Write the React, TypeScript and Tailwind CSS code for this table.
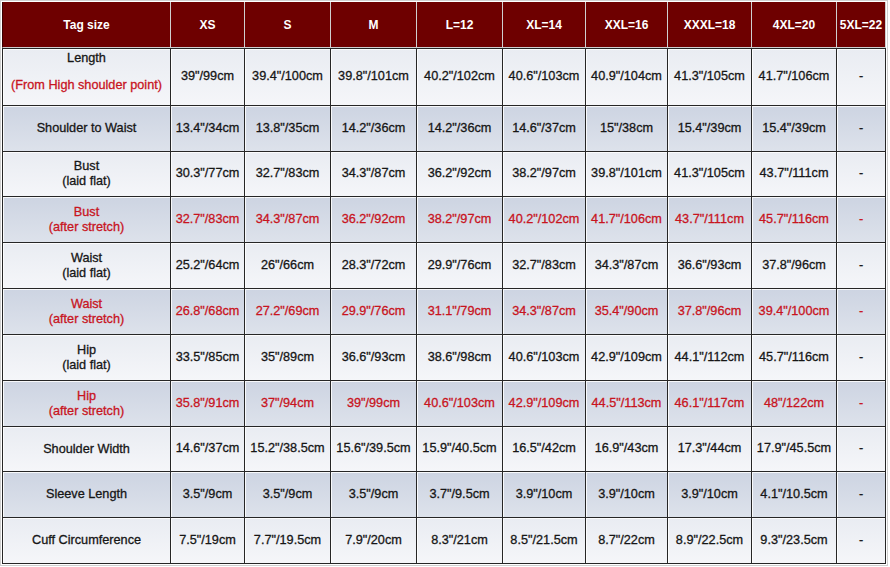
import React from "react";

type Row = {
	label: string;
	sub?: string;
	red?: boolean;
	dark?: boolean;
	values: string[];
};

const sizes = ["XS", "S", "M", "L=12", "XL=14", "XXL=16", "XXXL=18", "4XL=20", "5XL=22"];

const rows: Row[] = [
	{
		label: "Length",
		sub: "(From High shoulder point)",
		values: ['39"/99cm', '39.4"/100cm', '39.8"/101cm', '40.2"/102cm', '40.6"/103cm', '40.9"/104cm', '41.3"/105cm', '41.7"/106cm', "-"],
	},
	{
		label: "Shoulder to Waist",
		dark: true,
		values: ['13.4"/34cm', '13.8"/35cm', '14.2"/36cm', '14.2"/36cm', '14.6"/37cm', '15"/38cm', '15.4"/39cm', '15.4"/39cm', "-"],
	},
	{
		label: "Bust",
		sub: "(laid flat)",
		values: ['30.3"/77cm', '32.7"/83cm', '34.3"/87cm', '36.2"/92cm', '38.2"/97cm', '39.8"/101cm', '41.3"/105cm', '43.7"/111cm', "-"],
	},
	{
		label: "Bust",
		sub: "(after stretch)",
		red: true,
		dark: true,
		values: ['32.7"/83cm', '34.3"/87cm', '36.2"/92cm', '38.2"/97cm', '40.2"/102cm', '41.7"/106cm', '43.7"/111cm', '45.7"/116cm', "-"],
	},
	{
		label: "Waist",
		sub: "(laid flat)",
		values: ['25.2"/64cm', '26"/66cm', '28.3"/72cm', '29.9"/76cm', '32.7"/83cm', '34.3"/87cm', '36.6"/93cm', '37.8"/96cm', "-"],
	},
	{
		label: "Waist",
		sub: "(after stretch)",
		red: true,
		dark: true,
		values: ['26.8"/68cm', '27.2"/69cm', '29.9"/76cm', '31.1"/79cm', '34.3"/87cm', '35.4"/90cm', '37.8"/96cm', '39.4"/100cm', "-"],
	},
	{
		label: "Hip",
		sub: "(laid flat)",
		values: ['33.5"/85cm', '35"/89cm', '36.6"/93cm', '38.6"/98cm', '40.6"/103cm', '42.9"/109cm', '44.1"/112cm', '45.7"/116cm', "-"],
	},
	{
		label: "Hip",
		sub: "(after stretch)",
		red: true,
		dark: true,
		values: ['35.8"/91cm', '37"/94cm', '39"/99cm', '40.6"/103cm', '42.9"/109cm', '44.5"/113cm', '46.1"/117cm', '48"/122cm', "-"],
	},
	{
		label: "Shoulder Width",
		values: ['14.6"/37cm', '15.2"/38.5cm', '15.6"/39.5cm', '15.9"/40.5cm', '16.5"/42cm', '16.9"/43cm', '17.3"/44cm', '17.9"/45.5cm', "-"],
	},
	{
		label: "Sleeve Length",
		dark: true,
		values: ['3.5"/9cm', '3.5"/9cm', '3.5"/9cm', '3.7"/9.5cm', '3.9"/10cm', '3.9"/10cm', '3.9"/10cm', '4.1"/10.5cm', "-"],
	},
	{
		label: "Cuff Circumference",
		values: ['7.5"/19cm', '7.7"/19.5cm', '7.9"/20cm', '8.3"/21cm', '8.5"/21.5cm', '8.7"/22cm', '8.9"/22.5cm', '9.3"/23.5cm', "-"],
	},
];

// slightly heavier text, the source is a soft jpeg
const cellText = "text-[12.7px] [-webkit-text-stroke:0.3px_currentColor]";

const App = () => {
	return (
		<div className="w-[890px] h-[567px] bg-white font-['Liberation_Sans',Arial,sans-serif]">
			<div className="inline-block border border-[#cfcfcf] p-px bg-white">
				<div className="grid grid-cols-[169px_74px_86px_86px_86px_83px_82px_84px_85px_49px] grid-rows-[46px_58px_46px_45px_46px_46px_46px_46px_46px_45px_46px_46px]">
					{/* header */}
					<div className="flex items-center justify-center bg-[#6e0000] border-l border-l-[#3a0000] border-r border-b border-[#cfcfcf] text-white font-bold text-[12px]">
						Tag size
					</div>
					{sizes.map((s) => (
						<div
							key={s}
							className="flex items-center justify-center bg-[#6e0000] border-r border-b border-[#cfcfcf] text-white font-bold text-[12px] whitespace-nowrap"
						>
							{s}
						</div>
					))}

					{rows.map((row, ri) => {
						const bg = row.dark
							? "bg-gradient-to-b from-[#cdd4e2] to-[#dde2eb]"
							: "bg-gradient-to-b from-[#e9ecf2] to-[#f5f6f9]";
						const color = row.red ? "text-[#c8141e]" : "text-[#161616]";
						const top = ri === 0 ? "border-t" : "";
						return (
							<React.Fragment key={ri}>
								{row.label === "Length" ? (
									<div
										className={`flex flex-col items-center pt-[2px] border-l border-r border-b border-[#262626] ${top} ${bg} shadow-[inset_1px_1px_0_rgba(255,255,255,0.85)] ${cellText} leading-[15px]`}
									>
										<span className="text-[#161616]">{row.label}</span>
										<span className="mt-[12px] text-[#c8141e]">{row.sub}</span>
									</div>
								) : (
									<div
										className={`flex flex-col items-center justify-center border-l border-r border-b border-[#262626] ${bg} shadow-[inset_1px_1px_0_rgba(255,255,255,0.85)] ${cellText} leading-[15px] ${color}`}
									>
										<span>{row.label}</span>
										{row.sub ? <span>{row.sub}</span> : null}
									</div>
								)}
								{row.values.map((v, vi) => (
									<div
										key={vi}
										className={`flex items-center justify-center whitespace-nowrap border-r border-b border-[#262626] ${top} ${bg} shadow-[inset_1px_1px_0_rgba(255,255,255,0.85)] ${cellText} ${color}`}
									>
										{v}
									</div>
								))}
							</React.Fragment>
						);
					})}
				</div>
			</div>
		</div>
	);
};

export default App;
